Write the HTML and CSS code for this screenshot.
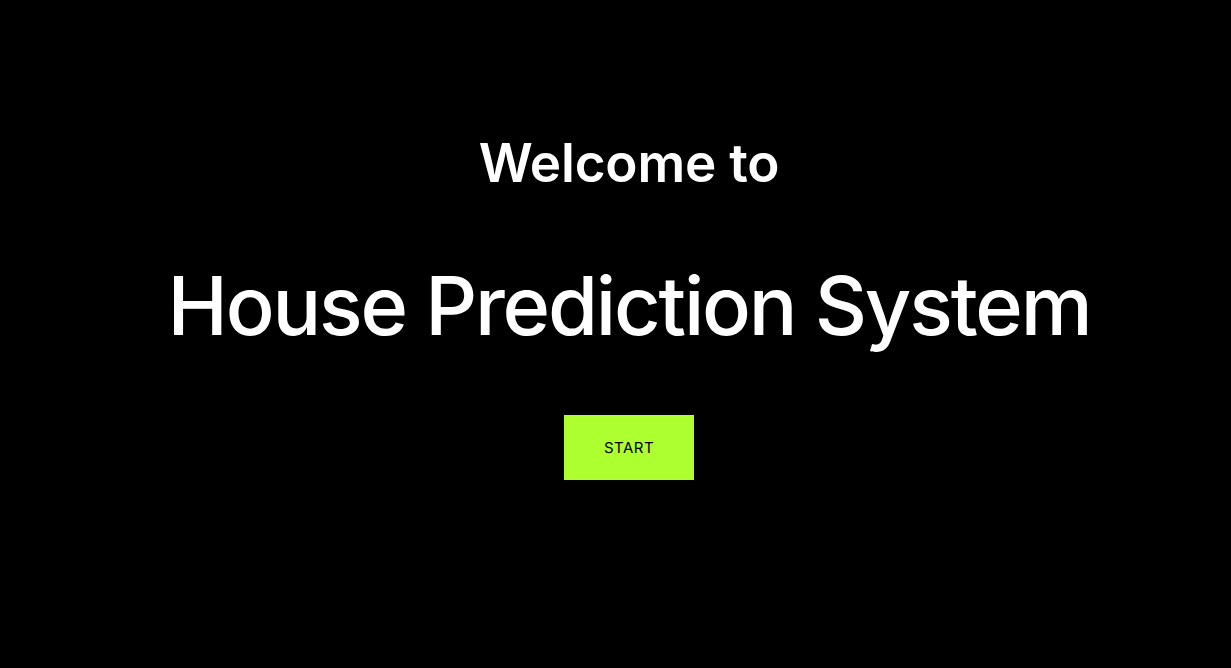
FILE: index.html
```html
<!DOCTYPE html>
<html lang="en">
<head>
<meta charset="utf-8">
<title>House Prediction System</title>
<link rel="stylesheet" href="styles.css">
</head>
<body>
<main class="hero">
  <h2 class="hero-sub">Welcome to</h2>
  <h1 class="hero-title">House Prediction System</h1>
  <a class="start-btn" href="#">START</a>
</main>
</body>
</html>
```
FILE: styles.css
```css
html, body {
  margin: 0;
  padding: 0;
  background: #000;
  height: 100%;
}
.hero {
  display: flex;
  flex-direction: column;
  align-items: center;
  padding-top: 130px;
  padding-left: 27px;
  color: #fff;
  font-family: Inter, "Noto Sans", sans-serif;
}
.hero-sub {
  margin: 0;
  font-size: 53px;
  font-weight: 600;
  line-height: 66px;
  letter-spacing: -0.2px;
}
.hero-title {
  margin: 60px 0 0;
  font-size: 81px;
  font-weight: 500;
  line-height: 100px;
  letter-spacing: -2.2px;
}
.start-btn {
  margin-top: 59px;
  width: 130px;
  height: 65px;
  display: flex;
  align-items: center;
  justify-content: center;
  background: #adff2f;
  color: #000;
  text-decoration: none;
  font-size: 15px;
  letter-spacing: 0.5px;
}
```
